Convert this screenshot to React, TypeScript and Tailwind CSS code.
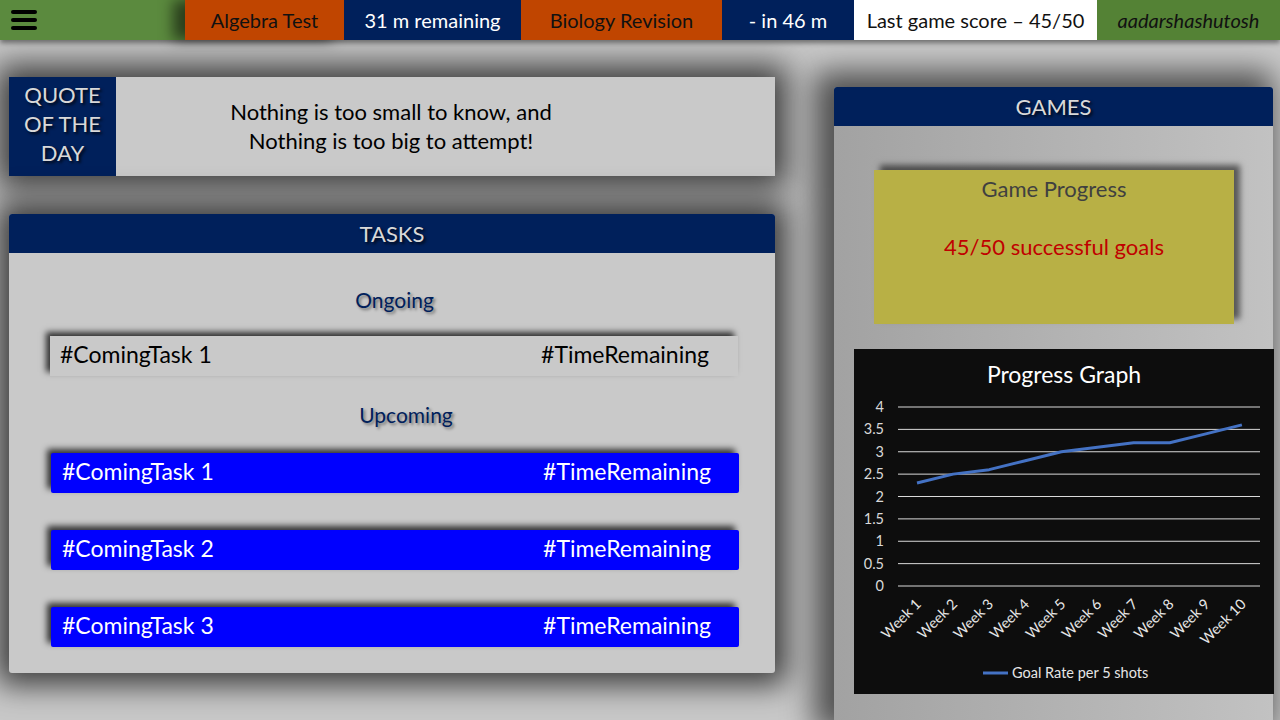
import React from "react";

const weeks = [2.3, 2.5, 2.6, 2.8, 3.0, 3.1, 3.2, 3.2, 3.4, 3.6];
const yTicks = ["0", "0.5", "1", "1.5", "2", "2.5", "3", "3.5", "4"];

function ProgressGraph() {
  const top = 58;
  const bottom = 237;
  const unit = (bottom - top) / 4;
  const x0 = 63;
  const step = 36.1;
  const pts = weeks
    .map((v, i) => `${x0 + i * step},${bottom - v * unit}`)
    .join(" ");

  return (
    <svg width="420" height="345" className="block">
      <text x="210" y="34" textAnchor="middle" fill="#ffffff" fontSize="23">
        Progress Graph
      </text>
      {yTicks.map((t, i) => {
        const y = bottom - i * (unit / 2);
        return (
          <g key={t}>
            <line x1="44" x2="406" y1={y} y2={y} stroke="#d9d9d9" strokeWidth="1" />
            <text x="30" y={y + 5} textAnchor="end" fill="#d9d9d9" fontSize="14.5">
              {t}
            </text>
          </g>
        );
      })}
      <polyline points={pts} fill="none" stroke="#4472c4" strokeWidth="3" strokeLinejoin="round" />
      {weeks.map((_, i) => {
        const x = x0 + i * step + 5;
        const y = 256;
        return (
          <text
            key={i}
            x={x}
            y={y}
            textAnchor="end"
            fill="#e6e6e6"
            fontSize="14.5"
            transform={`rotate(-45 ${x} ${y})`}
          >
            {`Week ${i + 1}`}
          </text>
        );
      })}
      <line x1="129" x2="154" y1="324" y2="324" stroke="#4472c4" strokeWidth="3" />
      <text x="158" y="329" fill="#e6e6e6" fontSize="14.5">
        Goal Rate per 5 shots
      </text>
    </svg>
  );
}

function TaskRow({ name, blue }: { name: string; blue?: boolean }) {
  return (
    <div
      className={
        blue
          ? "h-10 flex items-center justify-between pl-[11px] pr-[28px] bg-[#0000ff] text-white rounded-[2px] shadow-[-4px_-4px_6px_rgba(0,0,0,0.75)]"
          : "h-10 flex items-center justify-between pl-[10px] pr-[29px] bg-[#c9c9c9] text-black shadow-[-4px_-4px_6px_rgba(0,0,0,0.75)]"
      }
    >
      <span className="text-[23px] -mt-[3px]">{name}</span>
      <span className="text-[23px] -mt-[3px]">#TimeRemaining</span>
    </div>
  );
}

export default function App() {
  const headerText =
    "text-[#d9d9d9] text-[22px] [text-shadow:2px_2px_3px_rgba(0,0,0,0.8)]";

  return (
    <div className="w-[1280px] h-[720px] bg-[#c8c8c8] overflow-hidden font-['Lato',sans-serif] relative">
      {/* top bar */}
      <div className="relative z-20 h-10 flex text-[20px] shadow-[0_3px_5px_rgba(0,0,0,0.45)]">
        <div className="w-[185px] bg-[#5b8a3e] flex items-center pl-[11px]">
          <div className="flex flex-col gap-[4px] blur-[0.4px]">
            <div className="w-[26px] h-[4px] bg-black rounded-full" />
            <div className="w-[26px] h-[4px] bg-black rounded-full" />
            <div className="w-[26px] h-[4px] bg-black rounded-full" />
          </div>
        </div>
        <div className="w-[159px] bg-[#c04500] text-[#111] flex items-center justify-center shadow-[-12px_0_14px_rgba(0,0,0,0.55)]">
          Algebra Test
        </div>
        <div className="w-[177px] bg-[#00205b] text-white flex items-center justify-center">
          31 m remaining
        </div>
        <div className="w-[201px] bg-[#c04500] text-[#111] flex items-center justify-center">
          Biology Revision
        </div>
        <div className="w-[132px] bg-[#00205b] text-white flex items-center justify-center">
          - in 46 m
        </div>
        <div className="w-[243px] bg-white text-[#111] flex items-center justify-center">
          Last game score – 45/50
        </div>
        <div className="flex-1 bg-[#548235] text-[#111] italic flex items-center justify-center">
          aadarshashutosh
        </div>
      </div>

      <div className="flex">
        {/* left column */}
        <div className="w-[766px] ml-[9px] flex flex-col">
          <div className="mt-[37px] h-[99px] flex bg-[#c9c9c9] shadow-[0_0_30px_12px_rgba(0,0,0,0.7)] relative z-10">
            <div className={`w-[107px] bg-[#00205b] flex flex-col items-center justify-center leading-[29px] pb-[6px] ${headerText}`}>
              <span>QUOTE</span>
              <span>OF THE</span>
              <span>DAY</span>
            </div>
            <div className="flex-1 flex flex-col items-center justify-center text-[22px] leading-[29px] text-black pr-[109px] pb-[2px]">
              <span>Nothing is too small to know, and</span>
              <span>Nothing is too big to attempt!</span>
            </div>
          </div>

          <div className="mt-[38px] h-[459px] flex flex-col bg-[#c9c9c9] rounded-[3px] shadow-[0_0_30px_12px_rgba(0,0,0,0.7)] relative z-10">
            <div className={`h-[39px] bg-[#00205b] rounded-t-[3px] flex items-center justify-center ${headerText}`}>
              TASKS
            </div>
            <div className="flex flex-col pl-[41px] pr-[36px]">
              <div className="mt-[33px] h-[28px] flex items-center justify-center text-[21px] text-[#00205b] [text-shadow:2px_2px_3px_rgba(0,0,0,0.45)]">
                Ongoing
              </div>
              <div className="mt-[22px] mr-[1px]">
                <TaskRow name="#ComingTask 1" />
              </div>
              <div className="mt-[25px] h-[28px] flex items-center justify-center text-[21px] text-[#00205b] [text-shadow:2px_2px_3px_rgba(0,0,0,0.45)] pl-[23px]">
                Upcoming
              </div>
              <div className="mt-[24px] ml-[1px] flex flex-col gap-[37px]">
                <TaskRow name="#ComingTask 1" blue />
                <TaskRow name="#ComingTask 2" blue />
                <TaskRow name="#ComingTask 3" blue />
              </div>
            </div>
          </div>
        </div>

        {/* right column */}
        <div className="ml-[59px] mt-[47px] w-[439px] h-[640px] flex flex-col bg-gradient-to-r from-[#a2a2a2] to-[#c2c2c2] shadow-[-10px_-6px_30px_10px_rgba(0,0,0,0.6)] rounded-t-[3px] relative z-10">
          <div className={`h-[39px] bg-[#00205b] rounded-t-[3px] flex items-center justify-center ${headerText}`}>
            GAMES
          </div>
          <div className="mt-[44px] ml-[40px] w-[360px] h-[154px] bg-[#b8b045] flex flex-col items-center shadow-[6px_-5px_6px_rgba(0,0,0,0.55)]">
            <span className="mt-[2px] text-[22px] text-[#404040]">Game Progress</span>
            <span className="mt-[25px] text-[22px] text-[#c00000]">45/50 successful goals</span>
          </div>
          <div className="mt-[25px] ml-[20px] w-[420px] h-[345px] bg-[#0d0d0d]">
            <ProgressGraph />
          </div>
        </div>
      </div>
    </div>
  );
}
